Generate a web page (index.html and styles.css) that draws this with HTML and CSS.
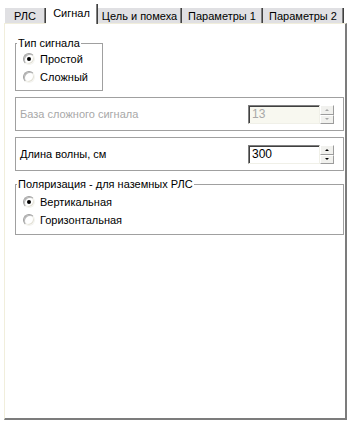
FILE: index.html
```html
<!DOCTYPE html>
<html lang="ru">
<head>
    <meta charset="UTF-8">
    <meta name="viewport" content="width=device-width, initial-scale=1.0">
    <title>Сигнал</title>
    <link rel="stylesheet" href="styles.css">
</head>
<body>
    <div class="dialog">
        <div class="tabs">
            <div class="tab tab-rls">РЛС</div>
            <div class="tab tab-signal active">Сигнал</div>
            <div class="tab tab-target">Цель и помеха</div>
            <div class="tab tab-params">Параметры 1</div>
            <div class="tab tab-params">Параметры 2</div>
        </div>

        <div class="panel">
            <fieldset class="group group-type">
                <legend>Тип сигнала</legend>
                <div class="radio"><span class="radio-mark checked"></span>Простой</div>
                <div class="radio"><span class="radio-mark"></span>Сложный</div>
            </fieldset>

            <div class="field disabled">
                <span class="field-label">База сложного сигнала</span>
                <div class="spin">
                    <div class="spin-input">13</div>
                    <div class="spin-buttons">
                        <span class="spin-btn"><span class="arrow up"></span></span>
                        <span class="spin-btn"><span class="arrow down"></span></span>
                    </div>
                </div>
            </div>

            <div class="field">
                <span class="field-label">Длина волны, см</span>
                <div class="spin">
                    <div class="spin-input">300</div>
                    <div class="spin-buttons">
                        <span class="spin-btn"><span class="arrow up"></span></span>
                        <span class="spin-btn"><span class="arrow down"></span></span>
                    </div>
                </div>
            </div>

            <fieldset class="group group-polar">
                <legend>Поляризация - для наземных РЛС</legend>
                <div class="radio"><span class="radio-mark checked"></span>Вертикальная</div>
                <div class="radio"><span class="radio-mark"></span>Горизонтальная</div>
            </fieldset>
        </div>
    </div>
</body>
</html>
```

FILE: styles.css
```css
body {
    margin: 0;
    background-color: #fff;
    font-family: "Liberation Sans", Arial, sans-serif;
    font-size: 11px;
    color: #000;
}
.dialog {
    margin: 4px 0 0 4px;
    width: 343px;
}

/* tab strip */
.tabs {
    display: flex;
    align-items: flex-end;
    height: 19px;
    padding-left: 1px;
}
.tab {
    display: flex;
    align-items: center;
    justify-content: center;
    box-sizing: border-box;
    height: 15px;
    background-color: #e0e0e3;
    border-right: 1px solid #404040;
    box-shadow: inset -1px 0 #808080;
    white-space: nowrap;
}
.tab.active {
    position: relative;
    z-index: 1;
    height: 20px;
    margin-bottom: -1px;
    padding-bottom: 2px;
    background-color: #fff;
}
.tab-rls { width: 41px; }
.tab-signal { width: 52px; }
.tab-target { width: 84px; }
.tab-params { width: 81px; }

/* page */
.panel {
    box-sizing: border-box;
    height: 397px;
    padding: 0 1px 0 10px;
    border-top: 1px solid #f1eedc;
    border-left: 1px solid #f1eedc;
    border-right: 2px solid #7c7c7c;
    border-bottom: 2px solid #7c7c7c;
}

.group {
    margin: 0;
    min-width: 0;
    border: 1px solid #a0a0a0;
    padding: 0 7px 4px;
}
.group legend {
    padding: 0 1px;
    margin-left: -6px;
    line-height: 13px;
}
.group-type {
    width: 88px;
    box-sizing: border-box;
    margin-top: 13px;
}
.group-polar {
    margin-top: 7px;
    padding-top: 2px;
    padding-bottom: 5px;
}

.radio {
    display: flex;
    align-items: center;
    gap: 5px;
    height: 18px;
    white-space: nowrap;
}
.radio-mark {
    display: flex;
    align-items: center;
    justify-content: center;
    box-sizing: border-box;
    width: 12px;
    height: 12px;
    border-radius: 50%;
    border: 1px solid;
    border-color: #a0a0a0 #f4f4f0 #f4f4f0 #a0a0a0;
    background-color: #fff;
    box-shadow: inset 1px 1px #b8b8b8, inset -1px -1px #e4e2d8;
}
.radio-mark.checked::after {
    content: "";
    width: 4px;
    height: 4px;
    border-radius: 50%;
    background-color: #000;
}

/* label + spinner rows */
.field {
    display: flex;
    align-items: center;
    justify-content: space-between;
    box-sizing: border-box;
    height: 34px;
    margin-top: 6px;
    padding: 0 9px 0 4px;
    border: 1px solid #a0a0a0;
}
.field.disabled .field-label,
.field.disabled .spin-input {
    color: #a8a8a8;
}
.spin {
    display: flex;
    height: 19px;
    margin-top: 1px;
}
.spin-input {
    box-sizing: border-box;
    width: 72px;
    height: 19px;
    padding-left: 3px;
    line-height: 17px;
    font-size: 12px;
    background-color: #fff;
    border: 1px solid;
    border-color: #808080 #f0f0e8 #f0f0e8 #808080;
    box-shadow: inset 1px 1px #404040;
}
.field.disabled .spin-input {
    background-color: #f8f8f0;
}
.spin-buttons {
    display: flex;
    flex-direction: column;
    width: 14px;
}
.spin-btn {
    display: flex;
    align-items: center;
    justify-content: center;
    box-sizing: border-box;
    flex: 1;
    background-color: #f1f1ee;
    border: 1px solid;
    border-color: #fff #9c9c9c #9c9c9c #fff;
}
.arrow {
    width: 0;
    height: 0;
    border-left: 2px solid transparent;
    border-right: 2px solid transparent;
}
.arrow.up { border-bottom: 2px solid #000; }
.arrow.down { border-top: 2px solid #000; }
.field.disabled .arrow.up { border-bottom-color: #a8a8a8; }
.field.disabled .arrow.down { border-top-color: #a8a8a8; }
```
